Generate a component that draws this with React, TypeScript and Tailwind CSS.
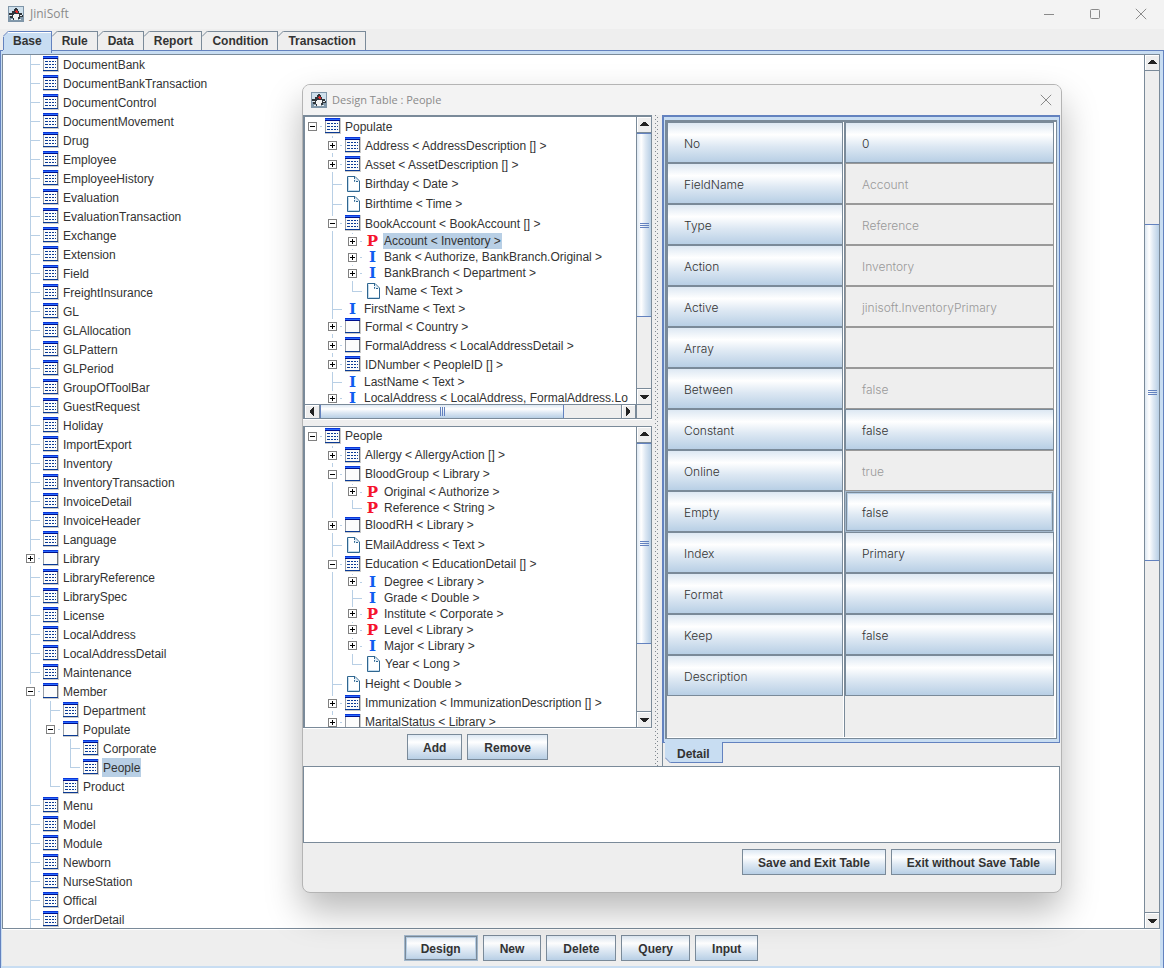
import React, { useState } from 'react';
import clsx from 'clsx';

type IconKind = 'table' | 'frame' | 'doc' | 'P' | 'I';

interface TreeNode {
  name: string;
  icon: IconKind;
  closed?: boolean;
  children?: TreeNode[];
}

const table = (name: string, children?: TreeNode[]): TreeNode => ({ name, icon: 'table', children });
const closed = (name: string, icon: IconKind): TreeNode => ({ name, icon, closed: true });
const leaf = (name: string, icon: IconKind): TreeNode => ({ name, icon });

const baseTree: TreeNode[] = [
  ...[
    'DocumentBank', 'DocumentBankTransaction', 'DocumentControl', 'DocumentMovement', 'Drug', 'Employee',
    'EmployeeHistory', 'Evaluation', 'EvaluationTransaction', 'Exchange', 'Extension', 'Field',
    'FreightInsurance', 'GL', 'GLAllocation', 'GLPattern', 'GLPeriod', 'GroupOfToolBar', 'GuestRequest',
    'Holiday', 'ImportExport', 'Inventory', 'InventoryTransaction', 'InvoiceDetail', 'InvoiceHeader', 'Language',
  ].map((name) => table(name)),
  closed('Library', 'frame'),
  ...['LibraryReference', 'LibrarySpec', 'License', 'LocalAddress', 'LocalAddressDetail', 'Maintenance'].map((name) => table(name)),
  {
    name: 'Member',
    icon: 'frame',
    children: [
      table('Department'),
      { name: 'Populate', icon: 'frame', children: [table('Corporate'), table('People')] },
      table('Product'),
    ],
  },
  ...['Menu', 'Model', 'Module', 'Newborn', 'NurseStation', 'Offical', 'OrderDetail'].map((name) => table(name)),
];

const populateTree: TreeNode[] = [
  table('Populate', [
    closed('Address < AddressDescription [] >', 'table'),
    closed('Asset < AssetDescription [] >', 'table'),
    leaf('Birthday < Date >', 'doc'),
    leaf('Birthtime < Time >', 'doc'),
    table('BookAccount < BookAccount [] >', [
      closed('Account < Inventory >', 'P'),
      closed('Bank < Authorize, BankBranch.Original >', 'I'),
      closed('BankBranch < Department >', 'I'),
      leaf('Name < Text >', 'doc'),
    ]),
    leaf('FirstName < Text >', 'I'),
    closed('Formal < Country >', 'frame'),
    closed('FormalAddress < LocalAddressDetail >', 'frame'),
    closed('IDNumber < PeopleID [] >', 'table'),
    leaf('LastName < Text >', 'I'),
    closed('LocalAddress < LocalAddress, FormalAddress.Lo', 'I'),
  ]),
];

const peopleTree: TreeNode[] = [
  table('People', [
    closed('Allergy < AllergyAction [] >', 'table'),
    {
      name: 'BloodGroup < Library >',
      icon: 'frame',
      children: [closed('Original < Authorize >', 'P'), leaf('Reference < String >', 'P')],
    },
    closed('BloodRH < Library >', 'frame'),
    leaf('EMailAddress < Text >', 'doc'),
    table('Education < EducationDetail [] >', [
      closed('Degree < Library >', 'I'),
      leaf('Grade < Double >', 'I'),
      closed('Institute < Corporate >', 'P'),
      closed('Level < Library >', 'P'),
      closed('Major < Library >', 'I'),
      leaf('Year < Long >', 'doc'),
    ]),
    leaf('Height < Double >', 'doc'),
    closed('Immunization < ImmunizationDescription [] >', 'table'),
    closed('MaritalStatus < Library >', 'frame'),
  ]),
];

const fields = [
  { label: 'No', value: '0' },
  { label: 'FieldName', value: 'Account', disabled: true },
  { label: 'Type', value: 'Reference', disabled: true },
  { label: 'Action', value: 'Inventory', disabled: true },
  { label: 'Active', value: 'jinisoft.InventoryPrimary', disabled: true },
  { label: 'Array', value: '', disabled: true },
  { label: 'Between', value: 'false', disabled: true },
  { label: 'Constant', value: 'false' },
  { label: 'Online', value: 'true', disabled: true },
  { label: 'Empty', value: 'false', focused: true },
  { label: 'Index', value: 'Primary' },
  { label: 'Format', value: '' },
  { label: 'Keep', value: 'false' },
  { label: 'Description', value: '' },
];

const steel = 'bg-[linear-gradient(to_bottom,#dde8f3,#ffffff_30%,#dde8f3_60%,#b8cfe5)]';
const focusRing = 'border-[#a3b8cc] shadow-[inset_0_0_0_1px_#7a8a99,inset_0_0_0_2px_#b8cfe5]';

const DukeIcon = () => (
  <svg width="16" height="16" viewBox="0 0 16 16" shapeRendering="crispEdges" aria-hidden="true">
    <rect width="16" height="16" fill="#7f95a8" />
    <rect x="1" y="1" width="14" height="9" fill="#cfe0ec" />
    <rect x="1" y="10" width="14" height="5" fill="#8299ab" />
    <path d="M7 2h2v1h1v2h1v2h3v2h1v2h-3v2h-2v1H5v-2H2V9H1V7h3V5h2V3h1z" fill="#30363c" />
    <path d="M6 8h5v3h-1v3H6v-2H5V9h1z" fill="#f4f4f4" />
    <path d="M2 9h2v1H2zM12 9h2v1h-2zM3 13h2v1H3zM11 13h2v1h-2z" fill="#e8eef2" />
    <path d="M8 4h1v1h1v2H8V6H7V5h1z" fill="#e02a2a" />
  </svg>
);

const TreeIcon = ({ kind }: { kind: IconKind }) => {
  if (kind === 'P' || kind === 'I') {
    return (
      <span
        aria-hidden="true"
        className={clsx(
          'flex h-4 w-[15px] items-center justify-center font-["DejaVu_Serif",serif] text-[15px] leading-4 font-bold',
          kind === 'P' ? 'text-[#f5142d]' : 'text-[#0f5cf0]'
        )}
      >
        {kind}
      </span>
    );
  }
  if (kind === 'doc') {
    return (
      <svg width="16" height="16" viewBox="0 0 16 16" aria-hidden="true">
        <path d="M2.5 .5H10L14.5 5V15.5H2.5Z" fill="#fff" stroke="#2f6690" />
        <path d="M3.5 14.5V1.5" stroke="#c3dcee" />
        <path d="M3 14.5H14" stroke="#c3dcee" />
        <path d="M9.5 1V5.5H14" fill="#dcebf7" stroke="#2f6690" strokeDasharray="2 1" />
      </svg>
    );
  }
  return (
    <svg width="16" height="16" viewBox="0 0 16 16" shapeRendering="crispEdges" aria-hidden="true">
      <rect width="16" height="16" fill="#c9c9c9" />
      <rect x="0" y="3" width="1" height="12" fill="#9aa0a8" />
      <rect x="1" y="3" width="13" height="11" fill="#fcfcfc" />
      <rect x="14" y="3" width="1" height="12" fill="#6e7278" />
      <rect width="15" height="1" fill="#0a35d8" />
      <rect y="1" width="15" height="1" fill="#2a6bff" />
      <rect y="2" width="15" height="1" fill="#00108c" />
      <rect y="14" width="15" height="1" fill="#0a3a94" />
      {kind === 'table' && (
        <path
          d="M2 5h3v1H2zM6 5h2v1H6zM9 5h2v1H9zM12 5h1v1h-1zM2 8h3v1H2zM6 8h2v1H6zM9 8h2v1H9zM12 8h1v1h-1zM2 11h3v1H2zM6 11h2v1H6zM9 11h2v1H9zM12 11h1v1h-1z"
          fill="#0a3a94"
        />
      )}
    </svg>
  );
};

// One 20px wide step of the connecting lines in front of a node
const Guide = ({ height, line, tick }: { height: number; line: 'full' | 'half' | 'none'; tick?: 'leaf' | 'dot' }) => {
  const middle = Math.floor(height / 2);
  return (
    <svg width="20" height={height} className="shrink-0" shapeRendering="crispEdges" fill="#b8cfe5" aria-hidden="true">
      {line !== 'none' && <rect x="7" y="0" width="1" height={line === 'full' ? height : middle} />}
      {tick === 'leaf' && <rect x="7" y={middle} width="10" height="1" />}
      {tick === 'dot' && (
        <>
          <rect x="0" y={middle - 7} width="15" height="15" fill="#fff" />
          <rect x="15" y={middle} width="2" height="1" />
        </>
      )}
    </svg>
  );
};

interface BranchProps {
  nodes: TreeNode[];
  guides: boolean[];
  showRootLine: boolean;
  selected: string;
  onSelect: (name: string) => void;
}

const Branch: React.FC<BranchProps> = ({ nodes, guides, showRootLine, selected, onSelect }) => (
  <>
    {nodes.map((node, index) => {
      const top = guides.length === 0;
      const last = index === nodes.length - 1 && !(top && showRootLine);
      const letter = node.icon === 'P' || node.icon === 'I';
      const height = node.icon === 'doc' ? 20 : letter ? 16 : 19;
      const expandable = node.closed || !!node.children;
      return (
        <React.Fragment key={node.name}>
          <div
            role="treeitem"
            aria-expanded={expandable ? !node.closed : undefined}
            aria-selected={node.name === selected}
            className={clsx('flex shrink-0 items-center', height === 20 ? 'h-5' : letter ? 'h-4' : 'h-[19px]')}
          >
            {guides.map((on, i) => (
              <Guide key={i} height={height} line={on ? 'full' : 'none'} />
            ))}
            <div className="relative shrink-0">
              <Guide
                height={height}
                line={top && !showRootLine ? 'none' : last ? 'half' : 'full'}
                tick={expandable ? 'dot' : 'leaf'}
              />
              {expandable && (
                <button
                  aria-label={node.closed ? 'Expand' : 'Collapse'}
                  className="absolute inset-y-0 left-[3px] my-auto h-[9px] w-[9px] border border-[#808080] bg-white"
                >
                  <svg width="7" height="7" viewBox="0 0 7 7" shapeRendering="crispEdges" className="block">
                    <rect x="1" y="3" width="5" height="1" />
                    {node.closed && <rect x="3" y="1" width="1" height="5" />}
                  </svg>
                </button>
              )}
            </div>
            <span className={clsx('shrink-0', letter ? 'w-[15px]' : 'w-4', height === 19 && 'self-start pt-px')}>
              <TreeIcon kind={node.icon} />
            </span>
            <button
              onClick={() => onSelect(node.name)}
              className={clsx(
                'ml-[3px] flex h-full items-center px-px whitespace-nowrap',
                node.name === selected && 'bg-[#b8cfe5]'
              )}
            >
              {node.name}
            </button>
          </div>
          {node.children && (
            <Branch
              nodes={node.children}
              guides={[...guides, !last && !(top && !showRootLine)]}
              showRootLine={showRootLine}
              selected={selected}
              onSelect={onSelect}
            />
          )}
        </React.Fragment>
      );
    })}
  </>
);

const Tree: React.FC<{ nodes: TreeNode[]; label: string; initial?: string; nested?: boolean }> = ({
  nodes,
  label,
  initial = '',
  nested = false,
}) => {
  const [selected, setSelected] = useState(initial);
  return (
    <div
      role="tree"
      aria-label={label}
      className={clsx('flex min-h-0 min-w-0 flex-1 flex-col overflow-hidden bg-white', nested && 'pl-5')}
    >
      <Branch nodes={nodes} guides={[]} showRootLine={nested} selected={selected} onSelect={setSelected} />
    </div>
  );
};

const arrows = {
  up: 'M3 9h9v-1h-1v-1h-1v-1h-1v-1h-3v1h-1v1h-1v1h-1z',
  down: 'M3 6h9v1h-1v1h-1v1h-1v1h-3v-1h-1v-1h-1v-1h-1z',
  left: 'M9 3v9h-1v-1h-1v-1h-1v-1h-1v-3h1v-1h1v-1h1v-1z',
  right: 'M5 3v9h1v-1h1v-1h1v-1h1v-3h-1v-1h-1v-1h-1v-1z',
};

const ArrowButton = ({ dir }: { dir: keyof typeof arrows }) => (
  <button
    aria-label={`Scroll ${dir}`}
    className={clsx(
      'flex shrink-0 items-center justify-center border-[#7a8a99] bg-[#eeeeee] shadow-[inset_1px_1px_0_#ffffff]',
      dir === 'up' && 'h-4 border-b',
      dir === 'down' && 'h-4 border-t',
      dir === 'left' && 'w-[15px] border-r',
      dir === 'right' && 'w-[15px] border-x'
    )}
  >
    <svg width="15" height="13" viewBox="0 1 15 13" className="shrink-0" shapeRendering="crispEdges">
      <path d={arrows[dir]} fill="#222222" />
    </svg>
  </button>
);

// before / thumb / after are the shares of the track
const ScrollBar: React.FC<{ before: number; thumb: number; after: number; horizontal?: boolean }> = ({
  before,
  thumb,
  after,
  horizontal,
}) => (
  <div
    className={clsx(
      'flex shrink-0 border-[#7a8a99] bg-[#eeeeee]',
      horizontal ? 'h-[14px] min-w-0 flex-1 border-t' : 'w-[15px] flex-col border-l'
    )}
  >
    <ArrowButton dir={horizontal ? 'left' : 'up'} />
    <div style={{ flex: `${before} 0 0px` }} />
    <div
      style={{ flex: `${thumb} 0 0px` }}
      className={clsx(
        'flex items-center justify-center gap-px border-[#6382bf]',
        horizontal
          ? 'border-x bg-[linear-gradient(to_bottom,#dde8f3,#ffffff_30%,#dde8f3_60%,#b8cfe5)]'
          : 'flex-col border-y bg-[linear-gradient(to_right,#dde8f3,#ffffff_30%,#dde8f3_60%,#b8cfe5)]'
      )}
    >
      {[0, 1, 2].map((i) => (
        <span key={i} className={clsx('bg-[#6382bf]', horizontal ? 'h-[9px] w-px' : 'h-px w-[9px]')} />
      ))}
    </div>
    <div style={{ flex: `${after} 0 0px` }} />
    <ArrowButton dir={horizontal ? 'right' : 'down'} />
  </div>
);

const SteelButton: React.FC<{ children: string; focused?: boolean; wide?: boolean }> = ({ children, focused, wide }) => (
  <button
    className={clsx(
      'h-[26px] border pt-px font-bold',
      wide ? 'px-4' : 'px-[15px]',
      steel,
      focused ? focusRing : 'border-[#7a8a99]'
    )}
  >
    {children}
  </button>
);

const tabs = ['Base', 'Rule', 'Data', 'Report', 'Condition', 'Transaction'];

const TabStrip = () => {
  const [active, setActive] = useState('Base');
  return (
    <div role="tablist" className="flex h-[21px] shrink-0 items-end bg-[#eeeeee] pl-[3px]">
      {tabs.map((tab) => {
        const on = tab === active;
        return (
          <button
            key={tab}
            role="tab"
            aria-selected={on}
            onClick={() => setActive(tab)}
            className={clsx(
              'relative border-t border-r pr-[9px] pl-[10px] font-bold',
              on
                ? 'z-10 -mb-[3px] h-[22px] border-[#6382bf] bg-[#c8ddf2] pb-[3px] shadow-[inset_0_1px_0_#ffffff]'
                : 'h-[19px] border-[#7a8a99]'
            )}
          >
            <svg width="6" height="6" viewBox="0 0 6 6" className="absolute -top-px left-0" aria-hidden="true">
              <path d="M0 0H6L0 6Z" fill="#eeeeee" />
              <path d="M0 5.5L5.5 0" stroke={on ? '#6382bf' : '#7a8a99'} />
            </svg>
            {on && <span className="absolute top-[5px] bottom-[3px] left-0 w-px bg-[#6382bf]" />}
            {tab}
          </button>
        );
      })}
    </div>
  );
};

const CloseGlyph = () => (
  <svg width="12" height="12" viewBox="0 0 12 12" stroke="#8a8a8a" aria-hidden="true">
    <path d="M.8 .8L11.2 11.2M11.2 .8L.8 11.2" />
  </svg>
);

const FieldTable = () => (
  <table className='w-full table-fixed border-separate border-spacing-0 font-["Inter",sans-serif] font-light'>
    <colgroup>
      <col className="w-[177px]" />
      <col />
    </colgroup>
    <tbody>
      {fields.map((field) => (
        <tr key={field.label}>
          <th scope="row" className="border-r border-white p-0 text-left font-light">
            <div className={clsx('flex h-[41px] items-center border border-[#7a8a99] pt-[2px] pl-4', steel)}>
              {field.label}
            </div>
          </th>
          <td className="border-l border-[#7a8a99] p-0">
            <button
              disabled={field.disabled}
              aria-label={field.label}
              className={clsx(
                'block h-[41px] w-full border pt-[2px] pl-4 text-left',
                field.disabled ? 'border-[#999999] bg-[#eeeeee] text-[#999999]' : steel,
                !field.disabled && (field.focused ? focusRing : 'border-[#7a8a99]')
              )}
            >
              {field.value}
            </button>
          </td>
        </tr>
      ))}
    </tbody>
  </table>
);

const DesignDialog = () => (
  <section
    role="dialog"
    aria-label="Design Table : People"
    className="absolute top-[84px] right-[102px] bottom-[75px] left-[302px] flex flex-col overflow-hidden rounded-lg border border-[#b4b4b4] bg-[#eeeeee] shadow-[0_18px_36px_rgba(0,0,0,0.28)]"
  >
    <header className='flex h-[30px] shrink-0 items-center bg-[#f3f3f3] pr-[9px] pl-2 font-["Open_Sans",sans-serif] text-[11px] text-[#8a8a8a]'>
      <DukeIcon />
      <h2 className="ml-[5px] flex-1">Design Table : People</h2>
      <button aria-label="Close dialog">
        <CloseGlyph />
      </button>
    </header>

    <div className="flex min-h-0 flex-1">
      <div className="flex w-[349px] shrink-0 flex-col">
        <div className="flex min-h-0 flex-1 flex-col border-t-2 border-r border-b border-l-2 border-[#7a8a99]">
          <div className="flex min-h-0 flex-1">
            <Tree nodes={populateTree} label="Populate" initial="Account < Inventory >" />
            <ScrollBar before={0} thumb={184} after={71} />
          </div>
          <div className="flex shrink-0">
            <ScrollBar horizontal before={0} thumb={244} after={57} />
            <div className="w-[15px] border-t border-l border-[#7a8a99]" />
          </div>
        </div>
        <div className="h-[7px] shrink-0 border-t border-white" />
        <div className="flex min-h-0 flex-1 border-y border-r border-l-2 border-[#7a8a99]">
          <Tree nodes={peopleTree} label="People" />
          <ScrollBar before={0} thumb={202} after={68} />
        </div>
        <div className="flex h-[38px] shrink-0 justify-center gap-[5px] border-t border-white pt-[5px]">
          <SteelButton>Add</SteelButton>
          <SteelButton wide>Remove</SteelButton>
        </div>
      </div>

      <div className="flex w-[10px] shrink-0 justify-center">
        <svg width="4" height="100%" shapeRendering="crispEdges" aria-hidden="true">
          <pattern id="grip" width="4" height="4" patternUnits="userSpaceOnUse">
            <rect width="1" height="1" fill="#808890" />
            <rect x="2" y="2" width="1" height="1" fill="#808890" />
          </pattern>
          <rect width="4" height="100%" fill="url(#grip)" />
        </svg>
      </div>

      <div className="flex min-w-0 flex-1 flex-col pr-px">
        <div className="flex min-h-0 flex-1 flex-col border-t-2 border-r border-b border-l-2 border-[#6382bf] bg-[#c8ddf2] pt-[3px] pr-[2px] pb-[3px] pl-px">
          <div className="flex min-h-0 flex-1 flex-col border-t-2 border-r border-b border-l-2 border-[#7a8a99] bg-white pr-[2px] pb-px">
            <FieldTable />
            <div className="flex min-h-0 flex-1">
              <div className="w-[177px] border-r border-white bg-[#eeeeee]" />
              <div className="flex-1 border-l border-[#7a8a99] bg-[#eeeeee]" />
            </div>
          </div>
        </div>
        <div role="tablist" className="flex h-[23px] shrink-0 items-start border-l border-[#7a8a99] pl-[2px]">
          <button
            role="tab"
            aria-selected="true"
            className="relative -mt-px h-[21px] border-r border-b border-[#6382bf] bg-[#c8ddf2] px-3 pt-[3px] font-bold"
          >
            <svg width="6" height="6" viewBox="0 0 6 6" className="absolute -bottom-px left-0" aria-hidden="true">
              <path d="M0 0V6H6Z" fill="#eeeeee" />
              <path d="M0 .5L5.5 6" stroke="#6382bf" />
            </svg>
            Detail
          </button>
        </div>
      </div>
    </div>

    <textarea
      aria-label="Messages"
      className="mr-px h-[77px] shrink-0 resize-none border border-[#7a8a99] bg-white p-1 outline-none"
    />
    <footer className="flex h-[49px] shrink-0 justify-end gap-[5px] pt-[6px] pr-[5px]">
      <SteelButton>Save and Exit Table</SteelButton>
      <SteelButton>Exit without Save Table</SteelButton>
    </footer>
  </section>
);

export default function App() {
  return (
    <main className='relative flex h-screen flex-col overflow-hidden bg-[#eeeeee] font-["Liberation_Sans",Arial,sans-serif] text-xs text-[#333333]'>
      <header className='flex h-[29px] shrink-0 items-center bg-[#f3f3f3] pr-[17px] pb-[2px] pl-2 font-["Open_Sans",sans-serif] text-[#8a8a8a]'>
        <DukeIcon />
        <h1 className="ml-[6px] flex-1 text-xs">JiniSoft</h1>
        <div className="flex items-center gap-[34px]">
          <button aria-label="Minimize">
            <svg width="12" height="12" stroke="#8a8a8a">
              <path d="M1 6.5H11" />
            </svg>
          </button>
          <button aria-label="Maximize">
            <svg width="12" height="12" fill="none" stroke="#8a8a8a">
              <rect x="1.5" y="1.5" width="9" height="9" rx="1" />
            </svg>
          </button>
          <button aria-label="Close">
            <CloseGlyph />
          </button>
        </div>
      </header>
      <TabStrip />

      <div className="flex min-h-0 flex-1 flex-col border-x border-t border-[#6382bf] bg-[#c8ddf2] pt-[3px] pr-[3px] pb-[2px] pl-px">
        <div className="flex min-h-0 flex-1 border border-[#7a8a99]">
          <Tree nodes={baseTree} label="Base" initial="People" nested />
          <ScrollBar before={153} thumb={336} after={352} />
        </div>
        <div className="flex h-[37px] shrink-0 justify-center gap-[5px] border-t border-white bg-[#eeeeee] pt-[5px]">
          <SteelButton focused wide>Design</SteelButton>
          <SteelButton wide>New</SteelButton>
          <SteelButton wide>Delete</SteelButton>
          <SteelButton wide>Query</SteelButton>
          <SteelButton wide>Input</SteelButton>
        </div>
      </div>

      <DesignDialog />
    </main>
  );
}
